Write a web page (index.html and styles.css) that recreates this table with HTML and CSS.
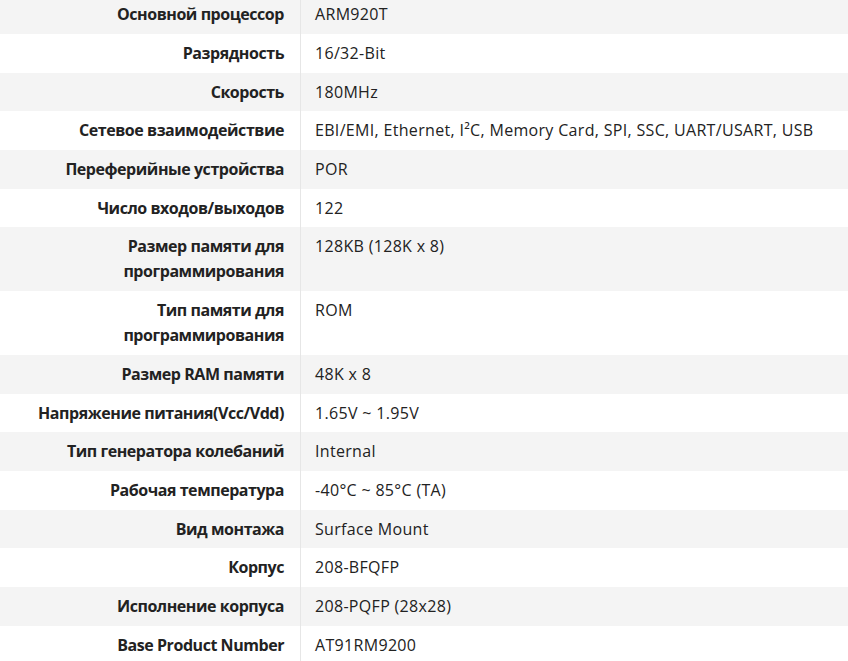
FILE: index.html
```html
<!DOCTYPE html>
<html lang="ru">
<head>
<meta charset="utf-8">
<link rel="stylesheet" href="styles.css">
</head>
<body>
<table class="specs">
<tbody>
<tr><th>Основной процессор</th><td>ARM920T</td></tr>
<tr><th>Разрядность</th><td>16/32-Bit</td></tr>
<tr><th>Скорость</th><td>180MHz</td></tr>
<tr><th>Сетевое взаимодействие</th><td>EBI/EMI, Ethernet, I²C, Memory Card, SPI, SSC, UART/USART, USB</td></tr>
<tr><th>Переферийные устройства</th><td>POR</td></tr>
<tr><th>Число входов/выходов</th><td>122</td></tr>
<tr><th>Размер памяти для программирования</th><td>128KB (128K x 8)</td></tr>
<tr><th>Тип памяти для программирования</th><td>ROM</td></tr>
<tr><th>Размер RAM памяти</th><td>48K x 8</td></tr>
<tr><th>Напряжение питания(Vcc/Vdd)</th><td>1.65V ~ 1.95V</td></tr>
<tr><th>Тип генератора колебаний</th><td>Internal</td></tr>
<tr><th>Рабочая температура</th><td>-40°C ~ 85°C (TA)</td></tr>
<tr><th>Вид монтажа</th><td>Surface Mount</td></tr>
<tr><th>Корпус</th><td>208-BFQFP</td></tr>
<tr><th>Исполнение корпуса</th><td>208-PQFP (28x28)</td></tr>
<tr><th>Base Product Number</th><td>AT91RM9200</td></tr>
</tbody>
</table>
</body>
</html>
```
FILE: styles.css
```css
html, body {
  margin: 0;
  padding: 0;
  background: #fff;
}
.specs {
  width: 848px;
  margin-top: -4.7px;
  border-collapse: collapse;
  font-family: "Open Sans", "Noto Sans", sans-serif;
  font-size: 16px;
  line-height: 25px;
  color: #222;
}
.specs tr:nth-child(odd) {
  background: #f4f4f4;
}
.specs th,
.specs td {
  padding: 7px 14px 6.7px;
  vertical-align: top;
}
.specs th {
  width: 270px;
  padding-right: 16px;
  text-align: right;
  font-weight: 700;
  letter-spacing: -0.45px;
  border-right: 1px solid #e6e6e6;
}
.specs td {
  text-align: left;
  font-weight: 400;
  letter-spacing: 0.32px;
}
```
